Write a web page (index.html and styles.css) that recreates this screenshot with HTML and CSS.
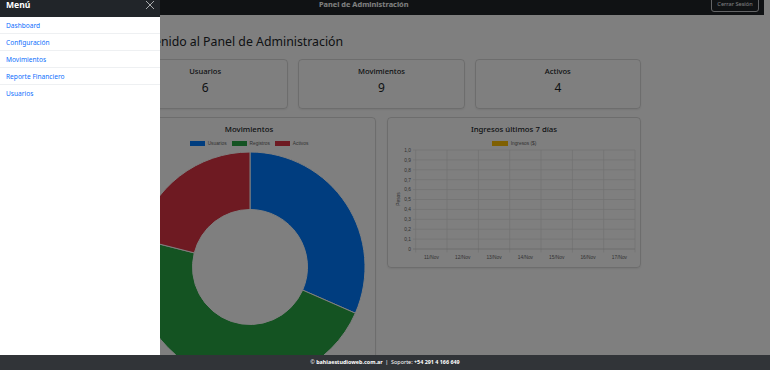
FILE: index.html
```html
<!DOCTYPE html>
<html lang="es">
<head>
<meta charset="utf-8">
<title>Panel de Administración</title>
<link rel="stylesheet" href="styles.css">
</head>
<body>
<nav class="topbar">
  <span class="topbar-title">Panel de Administración</span>
  <button class="logout">Cerrar Sesión</button>
</nav>

<main class="content">
  <h1 class="welcome">Bienvenido al Panel de Administración</h1>

  <section class="stats">
    <div class="stat-card"><div class="stat-title">Usuarios</div><div class="stat-value">6</div></div>
    <div class="stat-card"><div class="stat-title">Movimientos</div><div class="stat-value">9</div></div>
    <div class="stat-card"><div class="stat-title">Activos</div><div class="stat-value">4</div></div>
  </section>

  <section class="charts">
    <div class="chart-card donut-card">
      <div class="chart-title">Movimientos</div>
      <div class="legend">
        <span class="legend-item"><i class="swatch sw-blue"></i>Usuarios</span>
        <span class="legend-item"><i class="swatch sw-green"></i>Registros</span>
        <span class="legend-item"><i class="swatch sw-red"></i>Activos</span>
      </div>
      <svg class="donut" width="252" height="240" viewBox="0 0 252 240">
        <path fill="#007bff" stroke="#fff" stroke-width="1" d="M127,4 A115,115 0 0 1 232.33,165.20 L179.66,142.10 A57.5,57.5 0 0 0 127,61.5 Z"/>
        <path fill="#28a745" stroke="#fff" stroke-width="1" d="M232.33,165.20 A115,115 0 0 1 15.52,90.77 L71.26,104.88 A57.5,57.5 0 0 0 179.66,142.10 Z"/>
        <path fill="#dc3545" stroke="#fff" stroke-width="1" d="M15.52,90.77 A115,115 0 0 1 127,4 L127,61.5 A57.5,57.5 0 0 0 71.26,104.88 Z"/>
      </svg>
    </div>

    <div class="chart-card line-card">
      <div class="chart-title">Ingresos últimos 7 días</div>
      <div class="legend">
        <span class="legend-item"><i class="swatch sw-yellow"></i>Ingresos ($)</span>
      </div>
      <svg class="linechart" width="252" height="116" viewBox="0 0 252 116">
        <g stroke="#e5e5e5" stroke-width="0.8">
          <line x1="25" y1="2" x2="247" y2="2"/>
          <line x1="25" y1="11.9" x2="247" y2="11.9"/>
          <line x1="25" y1="21.8" x2="247" y2="21.8"/>
          <line x1="25" y1="31.7" x2="247" y2="31.7"/>
          <line x1="25" y1="41.6" x2="247" y2="41.6"/>
          <line x1="25" y1="51.5" x2="247" y2="51.5"/>
          <line x1="25" y1="61.4" x2="247" y2="61.4"/>
          <line x1="25" y1="71.3" x2="247" y2="71.3"/>
          <line x1="25" y1="81.2" x2="247" y2="81.2"/>
          <line x1="25" y1="91.1" x2="247" y2="91.1"/>
          <line x1="27.7" y1="2" x2="27.7" y2="104.5"/>
          <line x1="59" y1="2" x2="59" y2="104.5"/>
          <line x1="90.4" y1="2" x2="90.4" y2="104.5"/>
          <line x1="121.7" y1="2" x2="121.7" y2="104.5"/>
          <line x1="153" y1="2" x2="153" y2="104.5"/>
          <line x1="184.4" y1="2" x2="184.4" y2="104.5"/>
          <line x1="215.7" y1="2" x2="215.7" y2="104.5"/>
          <line x1="247" y1="2" x2="247" y2="104.5"/>
        </g>
        <line x1="25" y1="101" x2="247" y2="101" stroke="#d0d0d0" stroke-width="0.8"/>
        <g class="tick" text-anchor="end">
          <text x="23" y="3.8">1,0</text>
          <text x="23" y="13.7">0,9</text>
          <text x="23" y="23.6">0,8</text>
          <text x="23" y="33.5">0,7</text>
          <text x="23" y="43.4">0,6</text>
          <text x="23" y="53.3">0,5</text>
          <text x="23" y="63.2">0,4</text>
          <text x="23" y="73.1">0,3</text>
          <text x="23" y="83">0,2</text>
          <text x="23" y="92.9">0,1</text>
          <text x="23" y="102.8">0</text>
        </g>
        <text class="tick" x="0" y="0" text-anchor="middle" transform="translate(11.5,51) rotate(-90)">Pesos</text>
        <g class="tick" text-anchor="middle">
          <text x="43.4" y="111">11/Nov</text>
          <text x="74.7" y="111">12/Nov</text>
          <text x="106" y="111">13/Nov</text>
          <text x="137.4" y="111">14/Nov</text>
          <text x="168.7" y="111">15/Nov</text>
          <text x="200" y="111">16/Nov</text>
          <text x="231.4" y="111">17/Nov</text>
        </g>
      </svg>
    </div>
  </section>
</main>

<div class="backdrop"></div>

<aside class="offcanvas">
  <header class="offcanvas-header">
    <span class="offcanvas-title">Menú</span>
    <svg class="close" width="10" height="10" viewBox="0 0 10 10"><path d="M1,1 L9,9 M9,1 L1,9" stroke="#a9abad" stroke-width="1" fill="none"/></svg>
  </header>
  <ul class="menu">
    <li><a href="#">Dashboard</a></li>
    <li><a href="#">Configuración</a></li>
    <li><a href="#">Movimientos</a></li>
    <li><a href="#">Reporte Financiero</a></li>
    <li><a href="#">Usuarios</a></li>
  </ul>
</aside>

<footer class="footer">
  © <b>bahiaestudioweb.com.ar</b> &nbsp;|&nbsp; Soporte: <b>+54 291 4 166 649</b>
</footer>
</body>
</html>
```

FILE: styles.css
```css
* { box-sizing: border-box; }
html, body { margin: 0; padding: 0; }
body {
  width: 770px;
  height: 370px;
  overflow: hidden;
  background: #fff;
  color: #212529;
  font-family: "Noto Sans", "Open Sans", sans-serif;
}

.topbar {
  height: 15px;
  margin-right: 6px;
  background: #212529;
  display: flex;
  align-items: flex-start;
  padding-left: 319px;
  padding-right: 5px;
  overflow: hidden;
}
.topbar-title {
  color: #fff;
  font-weight: 700;
  font-size: 7.4px;
  line-height: 9px;
}
.logout {
  margin-left: auto;
  margin-top: -4px;
  height: 16px;
  width: 48px;
  padding: 0;
  border: 1px solid #c8cbce;
  border-radius: 3px;
  background: transparent;
  color: #f8f9fa;
  font-family: "Noto Sans", sans-serif;
  font-size: 5.6px;
  line-height: 14px;
}

.content {
  width: 519px;
  margin-left: 122px;
}
.welcome {
  margin: 19px 0 0;
  font-size: 12.3px;
  line-height: 16px;
  font-weight: 400;
  color: #212529;
}

.stats {
  margin-top: 9px;
  display: grid;
  grid-template-columns: repeat(3, 1fr);
  gap: 10px;
}
.stat-card {
  height: 50px;
  border: 1px solid rgba(0,0,0,.14);
  border-radius: 4px;
  box-shadow: 0 1px 2px rgba(0,0,0,.08);
  text-align: center;
  padding-top: 6px;
}
.stat-title {
  font-size: 7.6px;
  line-height: 10px;
  font-weight: 500;
}
.stat-value {
  margin-top: 4px;
  font-size: 12px;
  line-height: 16px;
}

.charts {
  margin-top: 8px;
  display: grid;
  grid-template-columns: 1fr 1fr;
  gap: 11px;
  align-items: start;
}
.chart-card {
  border: 1px solid rgba(0,0,0,.14);
  border-radius: 4px;
  box-shadow: 0 1px 2px rgba(0,0,0,.08);
  padding-top: 6px;
}
.donut-card { padding-bottom: 6px; }
.line-card { padding-bottom: 3px; }
.chart-title {
  text-align: center;
  font-size: 7.8px;
  line-height: 10px;
  font-weight: 500;
}
.legend {
  margin-top: 5px;
  height: 8px;
  display: flex;
  justify-content: center;
  gap: 5px;
  font-family: "Liberation Sans", Arial, sans-serif;
  font-size: 4.8px;
  color: #666;
}
.legend-item {
  display: flex;
  align-items: center;
  gap: 3px;
}
.swatch {
  display: block;
  width: 15px;
  height: 5px;
}
.sw-blue { background: #007bff; }
.sw-green { background: #28a745; }
.sw-red { background: #dc3545; }
.sw-yellow { background: #ffc107; width: 16px; }
.donut, .linechart { display: block; margin-top: 1px; }
.tick {
  font-family: "Liberation Sans", Arial, sans-serif;
  font-size: 4.8px;
  fill: #666;
}

.backdrop {
  position: fixed;
  inset: 0;
  background: rgba(0,0,0,.5);
  z-index: 1040;
}

.offcanvas {
  position: fixed;
  left: 0;
  top: 0;
  width: 160px;
  height: 100vh;
  background: #fff;
  z-index: 1045;
}
.offcanvas-header {
  height: 17px;
  background: #212529;
  display: flex;
  align-items: flex-start;
  justify-content: space-between;
  padding: 0 5px 0 6px;
}
.offcanvas-title {
  color: #fff;
  font-weight: 700;
  font-size: 8.6px;
  line-height: 11px;
}
.menu {
  list-style: none;
  margin: 0;
  padding: 0;
}
.menu li {
  height: 17px;
  border-bottom: 1px solid #eef0f2;
  display: flex;
  align-items: center;
  padding-left: 6px;
}
.menu li:last-child { border-bottom: 0; }
.menu a {
  color: #0d6efd;
  text-decoration: none;
  font-size: 6.6px;
}

.footer {
  position: fixed;
  left: 0;
  right: 0;
  bottom: 0;
  height: 15px;
  background: #313438;
  color: #fff;
  font-size: 5.4px;
  line-height: 15px;
  text-align: center;
  z-index: 1050;
}
.footer b { font-weight: 700; }
```
